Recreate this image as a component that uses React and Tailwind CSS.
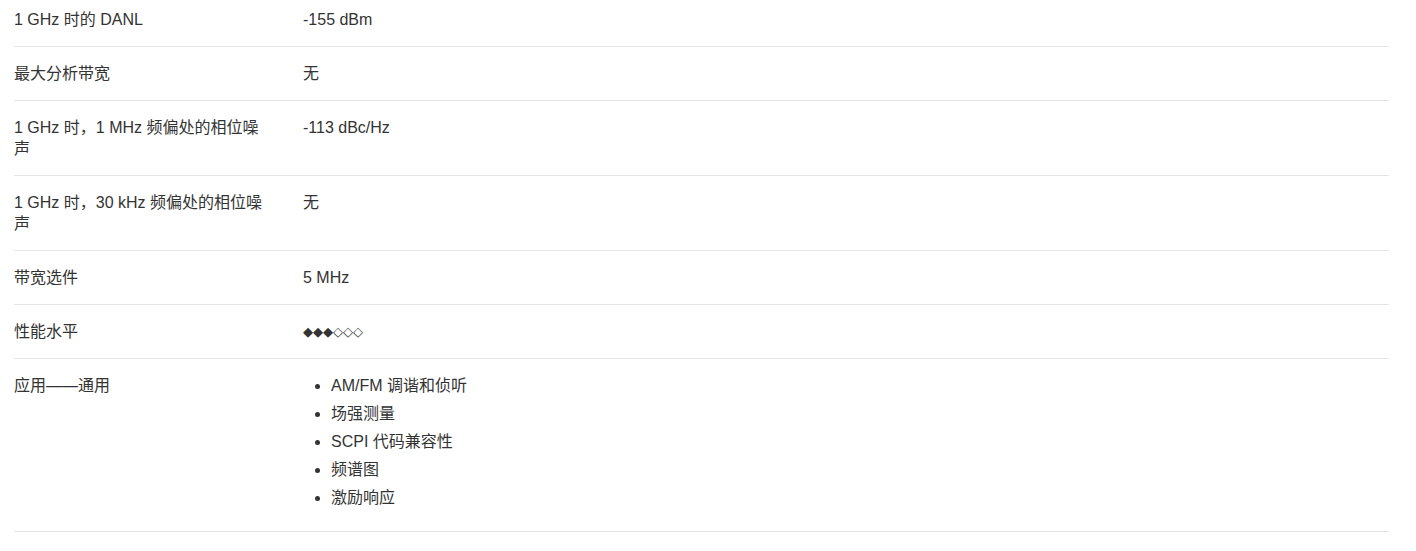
export default function App() {
  const rows = [
    { label: "1 GHz 时的 DANL", value: "-155 dBm", first: true },
    { label: "最大分析带宽", value: "无" },
    { label: "1 GHz 时，1 MHz 频偏处的相位噪声", value: "-113 dBc/Hz" },
    { label: "1 GHz 时，30 kHz 频偏处的相位噪声", value: "无" },
    { label: "带宽选件", value: "5 MHz" },
    { label: "性能水平", value: "diamonds" },
  ];
  const apps = ["AM/FM 调谐和侦听", "场强测量", "SCPI 代码兼容性", "频谱图", "激励响应"];
  return (
    <div
      className="w-[1416px] h-[551px] bg-white text-[#333333] text-[16px] leading-[21px]"
      style={{ fontFamily: '"Liberation Sans", Arial, "Noto Sans CJK SC", sans-serif' }}
    >
      <div className="ml-[14px] w-[1375px]">
        {rows.map((r, i) => (
          <div
            key={i}
            className={`grid grid-cols-[289px_1fr] border-b border-[#e5e5e5] pb-4 ${r.first ? "pt-[9px]" : "pt-4"}`}
          >
            <div className="pr-[34px]">{r.label}</div>
            <div className="h-fit">
              {r.value === "diamonds" ? (
                <span
                  className="block h-[21px] text-[13px] leading-[21px]"
                  style={{ fontFamily: '"DejaVu Sans", sans-serif' }}
                >
                  ◆◆◆◇◇◇
                </span>
              ) : (
                r.value
              )}
            </div>
          </div>
        ))}
        <div className="grid grid-cols-[289px_1fr] border-b border-[#e5e5e5] pt-4 pb-4">
          <div className="pr-[34px]">应用——通用</div>
          <ul className="list-disc pl-[28px]">
            {apps.map((a) => (
              <li key={a} className="mb-[7px]">{a}</li>
            ))}
          </ul>
        </div>
      </div>
    </div>
  );
}
